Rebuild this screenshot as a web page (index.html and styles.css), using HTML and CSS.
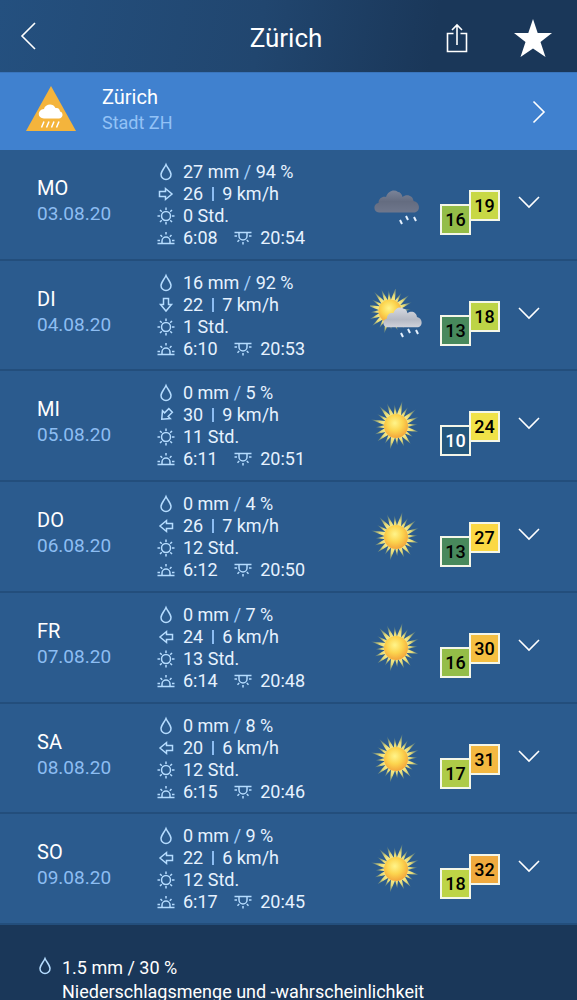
FILE: index.html
```html
<!DOCTYPE html>
<html lang="de">
<head>
    <meta charset="UTF-8">
    <meta name="viewport" content="width=device-width, initial-scale=1.0">
    <title>Zürich</title>
    <link rel="stylesheet" href="styles.css">
</head>
<body>
    <!-- Icons -->
    <svg class="sprite" aria-hidden="true">
        <defs>
            <radialGradient id="sunFill" cx="45%" cy="38%" r="65%">
                <stop offset="0" stop-color="#fff48a"/>
                <stop offset="0.5" stop-color="#fcd54f"/>
                <stop offset="1" stop-color="#f2a13a"/>
            </radialGradient>
            <radialGradient id="rayFill" gradientUnits="userSpaceOnUse" cx="0" cy="0" r="26">
                <stop offset="0.4" stop-color="#fff08a"/>
                <stop offset="0.65" stop-color="#e3d978"/>
                <stop offset="1" stop-color="#8fa36c" stop-opacity="0.2"/>
            </radialGradient>
            <linearGradient id="cloudFill" x1="0" y1="0" x2="0" y2="1">
                <stop offset="0" stop-color="#d6d9e0"/>
                <stop offset="0.6" stop-color="#b5b9c4"/>
                <stop offset="1" stop-color="#d0d2da"/>
            </linearGradient>
            <linearGradient id="darkCloudFill" x1="0" y1="0" x2="0" y2="1">
                <stop offset="0" stop-color="#7a8398"/>
                <stop offset="0.5" stop-color="#646c80"/>
                <stop offset="1" stop-color="#6f778c"/>
            </linearGradient>
            <g id="rays" fill="url(#rayFill)">
                <path d="M-2 -9L1 -26L3 -9zM9 -2L23 1L9 3zM2 9L-1 24L-3 9zM-9 2L-26 -1L-9 -3z"/>
            </g>
            <g id="sunShape">
                <use href="#rays" transform="rotate(12)"/>
                <use href="#rays" transform="rotate(30) scale(.86)"/>
                <use href="#rays" transform="rotate(48)"/>
                <use href="#rays" transform="rotate(66) scale(.94)"/>
                <use href="#rays" transform="rotate(84) scale(.84)"/>
                <circle r="12" fill="url(#sunFill)"/>
            </g>
            <path id="cloudShape" d="M5 22.500C-1 22 -1 13.500 4.500 13C4.500 8 9 6 12 7C14 1 20 -1 24 2C26 2 28 4 28.500 7C33 3.500 39 6 39.500 11C46 12 47 21 41 22.500z"/>
        </defs>
        <symbol id="drop" viewBox="0 0 18 20">
            <path d="M9 2.500C7.500 6 4 9.500 4 12.500a5 5 0 0 0 10 0C14 9.500 10.500 6 9 2.500z"/>
        </symbol>
        <symbol id="arrow" viewBox="0 0 18 20">
            <path d="M2.500 7.500h6V4.500l6.500 5.500l-6.500 5.500v-3h-6z"/>
        </symbol>
        <symbol id="sunshine" viewBox="0 0 18 20">
            <circle cx="9" cy="10" r="4.500"/>
            <path d="M9 1.500v2.500M9 16v2.500M.5 10H3M15 10h2.500M3 4l1.800 1.800M13.200 14.200L15 16M15 4l-1.800 1.800M4.800 14.200L3 16"/>
        </symbol>
        <symbol id="sunrise" viewBox="0 0 18 20">
            <path d="M.5 15.500h17M.5 12.500h2.500M15 12.500h2.500M5 15.500v-2.500a4 4 0 0 1 8 0v2.500M9 4v2.500M3.500 7L5.200 8.700M14.500 7L12.800 8.700"/>
        </symbol>
        <symbol id="sunset" viewBox="0 0 18 20">
            <path d="M.5 4.500h17M.5 8h2.500M15 8h2.500M5 4.500v3.500a4 4 0 0 0 8 0v-3.500M9 14v2.500M3.500 13.700L5.200 12M14.500 13.700L12.800 12"/>
        </symbol>
        <symbol id="sun" viewBox="0 0 54 54">
            <use href="#sunShape" transform="translate(26 27)"/>
        </symbol>
        <symbol id="sun-rain" viewBox="0 0 54 54">
            <use href="#sunShape" transform="translate(20 22) scale(.96)"/>
            <use href="#cloudShape" transform="translate(13 18) scale(.86 .9)" fill="url(#cloudFill)"/>
            <path class="rain" d="M31 44l2 4M38 40l2 4M46 41l2 4"/>
        </symbol>
        <symbol id="rain" viewBox="0 0 54 54">
            <use href="#cloudShape" transform="translate(4 12)" fill="url(#darkCloudFill)"/>
            <path class="rain" d="M30 42l2 4M36 38l2 4M44 39l2 4"/>
        </symbol>
        <symbol id="chevron" viewBox="0 0 24 24">
            <path d="M2 7l10 10L22 7"/>
        </symbol>
    </svg>

    <header class="topbar">
        <button type="button" class="icon-btn" aria-label="Zurück">
            <svg width="18" height="32" viewBox="0 0 18 32"><path d="M16 1L3 14L16 27"/></svg>
        </button>
        <h1>Zürich</h1>
        <div class="actions">
            <button type="button" class="icon-btn" aria-label="Teilen">
                <svg width="24" height="30" viewBox="0 0 24 30"><path d="M8.500 10.500H2.500v18h19v-18h-6M12 22V2M7 7l5-5l5 5"/></svg>
            </button>
            <button type="button" class="icon-btn" aria-label="Favorit">
                <svg width="40" height="40" viewBox="0 0 40 40"><path class="star" d="M20 1l4.700 14H39L27.500 24L32.500 39L20 30.500L7.500 39L12.500 24L1 15h14.300z"/></svg>
            </button>
        </div>
    </header>

    <a class="alert" href="#">
        <svg class="warning" viewBox="0 0 52 46">
            <path d="M26 0L51 45H1z" fill="#f4b43c"/>
            <path d="M19 32.500c-7 0-7-9 0-9.500c1-5 9-6.500 11.500-1c3.500-.500 4.500 2 4.500 3.500c4 1 3 7-1 7z" fill="#fff"/>
            <path d="M19 35.500l-2.500 6M24 35.500l-2.500 6M29 35.500l-2.500 6M34 35.500l-2.500 6" stroke="#fff" stroke-width="1.500"/>
        </svg>
        <span class="place">
            <span class="name">Zürich</span>
            <span class="region">Stadt ZH</span>
        </span>
        <svg class="next" viewBox="0 0 14 24"><path d="M1.500 1.500L12 12L1.500 22.500"/></svg>
    </a>

    <main class="forecast">
        <section class="day">
            <div class="date"><h2>MO</h2><time datetime="2020-08-03">03.08.20</time></div>
            <div class="details">
                <p><svg><use href="#drop"/></svg>27 mm <i>/</i> 94 %</p>
                <p><svg><use href="#arrow"/></svg>26 <i class="bar"></i> 9 km/h</p>
                <p><svg><use href="#sunshine"/></svg>0 Std.</p>
                <p><svg><use href="#sunrise"/></svg>6:08 <svg class="set"><use href="#sunset"/></svg>20:54</p>
            </div>
            <svg class="weather"><use href="#rain"/></svg>
            <div class="temps"><span class="min t16">16</span><span class="max t19">19</span></div>
            <button type="button" class="icon-btn more" aria-label="Details"><svg><use href="#chevron"/></svg></button>
        </section>
        <section class="day">
            <div class="date"><h2>DI</h2><time datetime="2020-08-04">04.08.20</time></div>
            <div class="details">
                <p><svg><use href="#drop"/></svg>16 mm <i>/</i> 92 %</p>
                <p><svg class="south"><use href="#arrow"/></svg>22 <i class="bar"></i> 7 km/h</p>
                <p><svg><use href="#sunshine"/></svg>1 Std.</p>
                <p><svg><use href="#sunrise"/></svg>6:10 <svg class="set"><use href="#sunset"/></svg>20:53</p>
            </div>
            <svg class="weather"><use href="#sun-rain"/></svg>
            <div class="temps"><span class="min t13">13</span><span class="max t18">18</span></div>
            <button type="button" class="icon-btn more" aria-label="Details"><svg><use href="#chevron"/></svg></button>
        </section>
        <section class="day">
            <div class="date"><h2>MI</h2><time datetime="2020-08-05">05.08.20</time></div>
            <div class="details">
                <p><svg><use href="#drop"/></svg>0 mm <i>/</i> 5 %</p>
                <p><svg class="southwest"><use href="#arrow"/></svg>30 <i class="bar"></i> 9 km/h</p>
                <p><svg><use href="#sunshine"/></svg>11 Std.</p>
                <p><svg><use href="#sunrise"/></svg>6:11 <svg class="set"><use href="#sunset"/></svg>20:51</p>
            </div>
            <svg class="weather"><use href="#sun"/></svg>
            <div class="temps"><span class="min t10">10</span><span class="max t24">24</span></div>
            <button type="button" class="icon-btn more" aria-label="Details"><svg><use href="#chevron"/></svg></button>
        </section>
        <section class="day">
            <div class="date"><h2>DO</h2><time datetime="2020-08-06">06.08.20</time></div>
            <div class="details">
                <p><svg><use href="#drop"/></svg>0 mm <i>/</i> 4 %</p>
                <p><svg class="west"><use href="#arrow"/></svg>26 <i class="bar"></i> 7 km/h</p>
                <p><svg><use href="#sunshine"/></svg>12 Std.</p>
                <p><svg><use href="#sunrise"/></svg>6:12 <svg class="set"><use href="#sunset"/></svg>20:50</p>
            </div>
            <svg class="weather"><use href="#sun"/></svg>
            <div class="temps"><span class="min t13">13</span><span class="max t27">27</span></div>
            <button type="button" class="icon-btn more" aria-label="Details"><svg><use href="#chevron"/></svg></button>
        </section>
        <section class="day">
            <div class="date"><h2>FR</h2><time datetime="2020-08-07">07.08.20</time></div>
            <div class="details">
                <p><svg><use href="#drop"/></svg>0 mm <i>/</i> 7 %</p>
                <p><svg class="west"><use href="#arrow"/></svg>24 <i class="bar"></i> 6 km/h</p>
                <p><svg><use href="#sunshine"/></svg>13 Std.</p>
                <p><svg><use href="#sunrise"/></svg>6:14 <svg class="set"><use href="#sunset"/></svg>20:48</p>
            </div>
            <svg class="weather"><use href="#sun"/></svg>
            <div class="temps"><span class="min t16">16</span><span class="max t30">30</span></div>
            <button type="button" class="icon-btn more" aria-label="Details"><svg><use href="#chevron"/></svg></button>
        </section>
        <section class="day">
            <div class="date"><h2>SA</h2><time datetime="2020-08-08">08.08.20</time></div>
            <div class="details">
                <p><svg><use href="#drop"/></svg>0 mm <i>/</i> 8 %</p>
                <p><svg class="west"><use href="#arrow"/></svg>20 <i class="bar"></i> 6 km/h</p>
                <p><svg><use href="#sunshine"/></svg>12 Std.</p>
                <p><svg><use href="#sunrise"/></svg>6:15 <svg class="set"><use href="#sunset"/></svg>20:46</p>
            </div>
            <svg class="weather"><use href="#sun"/></svg>
            <div class="temps"><span class="min t17">17</span><span class="max t31">31</span></div>
            <button type="button" class="icon-btn more" aria-label="Details"><svg><use href="#chevron"/></svg></button>
        </section>
        <section class="day">
            <div class="date"><h2>SO</h2><time datetime="2020-08-09">09.08.20</time></div>
            <div class="details">
                <p><svg><use href="#drop"/></svg>0 mm <i>/</i> 9 %</p>
                <p><svg class="west"><use href="#arrow"/></svg>22 <i class="bar"></i> 6 km/h</p>
                <p><svg><use href="#sunshine"/></svg>12 Std.</p>
                <p><svg><use href="#sunrise"/></svg>6:17 <svg class="set"><use href="#sunset"/></svg>20:45</p>
            </div>
            <svg class="weather"><use href="#sun"/></svg>
            <div class="temps"><span class="min t18">18</span><span class="max t32">32</span></div>
            <button type="button" class="icon-btn more" aria-label="Details"><svg><use href="#chevron"/></svg></button>
        </section>
    </main>

    <footer class="legend">
        <svg><use href="#drop"/></svg>
        <p>1.5 mm / 30 %<br>Niederschlagsmenge und -wahrscheinlichkeit</p>
    </footer>
</body>
</html>
```

FILE: styles.css
```css
* {
    box-sizing: border-box;
}
body {
    margin: 0;
    font-family: Roboto, "Noto Sans", sans-serif;
    font-size: 18px;
    line-height: 22px;
    background: #1a3759;
    color: #fff;
}
h1, h2, p {
    margin: 0;
    font-weight: 400;
}
svg {
    display: block;
    flex: none;
    fill: none;
    stroke: #fff;
    stroke-width: 1.6;
}
.sprite {
    position: absolute;
    width: 0;
    height: 0;
}
.icon-btn {
    padding: 0;
    border: none;
    background: none;
    cursor: pointer;
}

/* Header */
.topbar {
    display: grid;
    grid-template-columns: 1fr auto 1fr;
    align-items: center;
    height: 72px;
    padding: 4px 24px 0 19px;
    background: linear-gradient(100deg, #24507f, #21466f 45%, #1a3759 75%);
}
.topbar h1 {
    font-size: 26px;
    line-height: 32px;
}
.topbar .icon-btn {
    justify-self: start;
}
.actions {
    display: flex;
    justify-content: flex-end;
    align-items: center;
    gap: 44px;
}
.star {
    fill: #fff;
    stroke: none;
}

/* Alert */
.alert {
    display: flex;
    align-items: center;
    height: 78px;
    padding: 0 31px 0 25px;
    background: #4081cf;
    border-top: 1px solid #3a75bc;
    color: #fff;
    text-decoration: none;
}
.warning {
    width: 52px;
    height: 46px;
    margin-bottom: 6px;
    stroke: none;
}
.place {
    flex: 1;
    display: grid;
    padding: 0 0 4px 25px;
    line-height: 26px;
}
.name {
    font-size: 20px;
}
.region {
    color: #93c2f6;
}
.next {
    width: 14px;
    height: 24px;
}

/* Days */
.forecast {
    display: grid;
    grid-auto-rows: 1fr;
    min-height: 775px;
}
.day {
    display: flex;
    align-items: flex-start;
    padding: 11px 36px 9px 37px;
    background: #2b5b8e;
    border-bottom: 2px solid #234e7c;
}
.date {
    width: 120px;
    padding-top: 14px;
    line-height: 26px;
}
.date h2 {
    font-size: 20px;
}
time {
    font-size: 19px;
    color: #8dbdf2;
}
.details {
    flex: 1;
    color: #e6f2ff;
}
.details p {
    display: flex;
    align-items: center;
    white-space: pre;
}
.details svg, .legend svg {
    width: 18px;
    height: 20px;
    margin-right: 8px;
    stroke: #b5dcff;
    stroke-width: 1.5;
}
.details .set {
    margin-left: 12px;
}
.details i {
    font-style: normal;
    color: #a5d0fb;
}
.details .bar {
    width: 2px;
    height: 14px;
    margin: 0 4px;
    background: #8dbdf2;
}
.south {
    transform: rotate(90deg);
}
.southwest {
    transform: rotate(135deg);
}
.west {
    transform: rotate(180deg);
}
.weather {
    width: 54px;
    height: 54px;
    margin: 17px 16px 0 0;
    stroke: none;
}
.rain {
    stroke: #e6f2ff;
    stroke-width: 2;
}
.temps {
    display: flex;
    margin-top: 29px;
    color: #000;
    font-weight: 500;
    text-align: center;
}
.temps span {
    width: 31px;
    height: 31px;
    border: 2px solid #f4f6e8;
    line-height: 27px;
}
.min {
    margin-top: 14px;
}
.max {
    margin-left: -2px;
}
.t10 { background: #24577c; }
.temps .t10 { color: #fff; }
.t13 { background: #48895c; }
.t16 { background: #94bd48; }
.t17 { background: #aecb48; }
.t18 { background: #bdd446; }
.t19 { background: #c8d845; }
.t24 { background: #f0e248; }
.t27 { background: #fbd843; }
.t30 { background: #f5bf41; }
.t31 { background: #f3b840; }
.t32 { background: #f0aa3e; }
.more {
    margin: 29px 0 0 17px;
}
.more svg {
    width: 24px;
    height: 24px;
}

/* Legend */
.legend {
    display: flex;
    padding: 31px 36px 0;
    line-height: 24px;
}
```
